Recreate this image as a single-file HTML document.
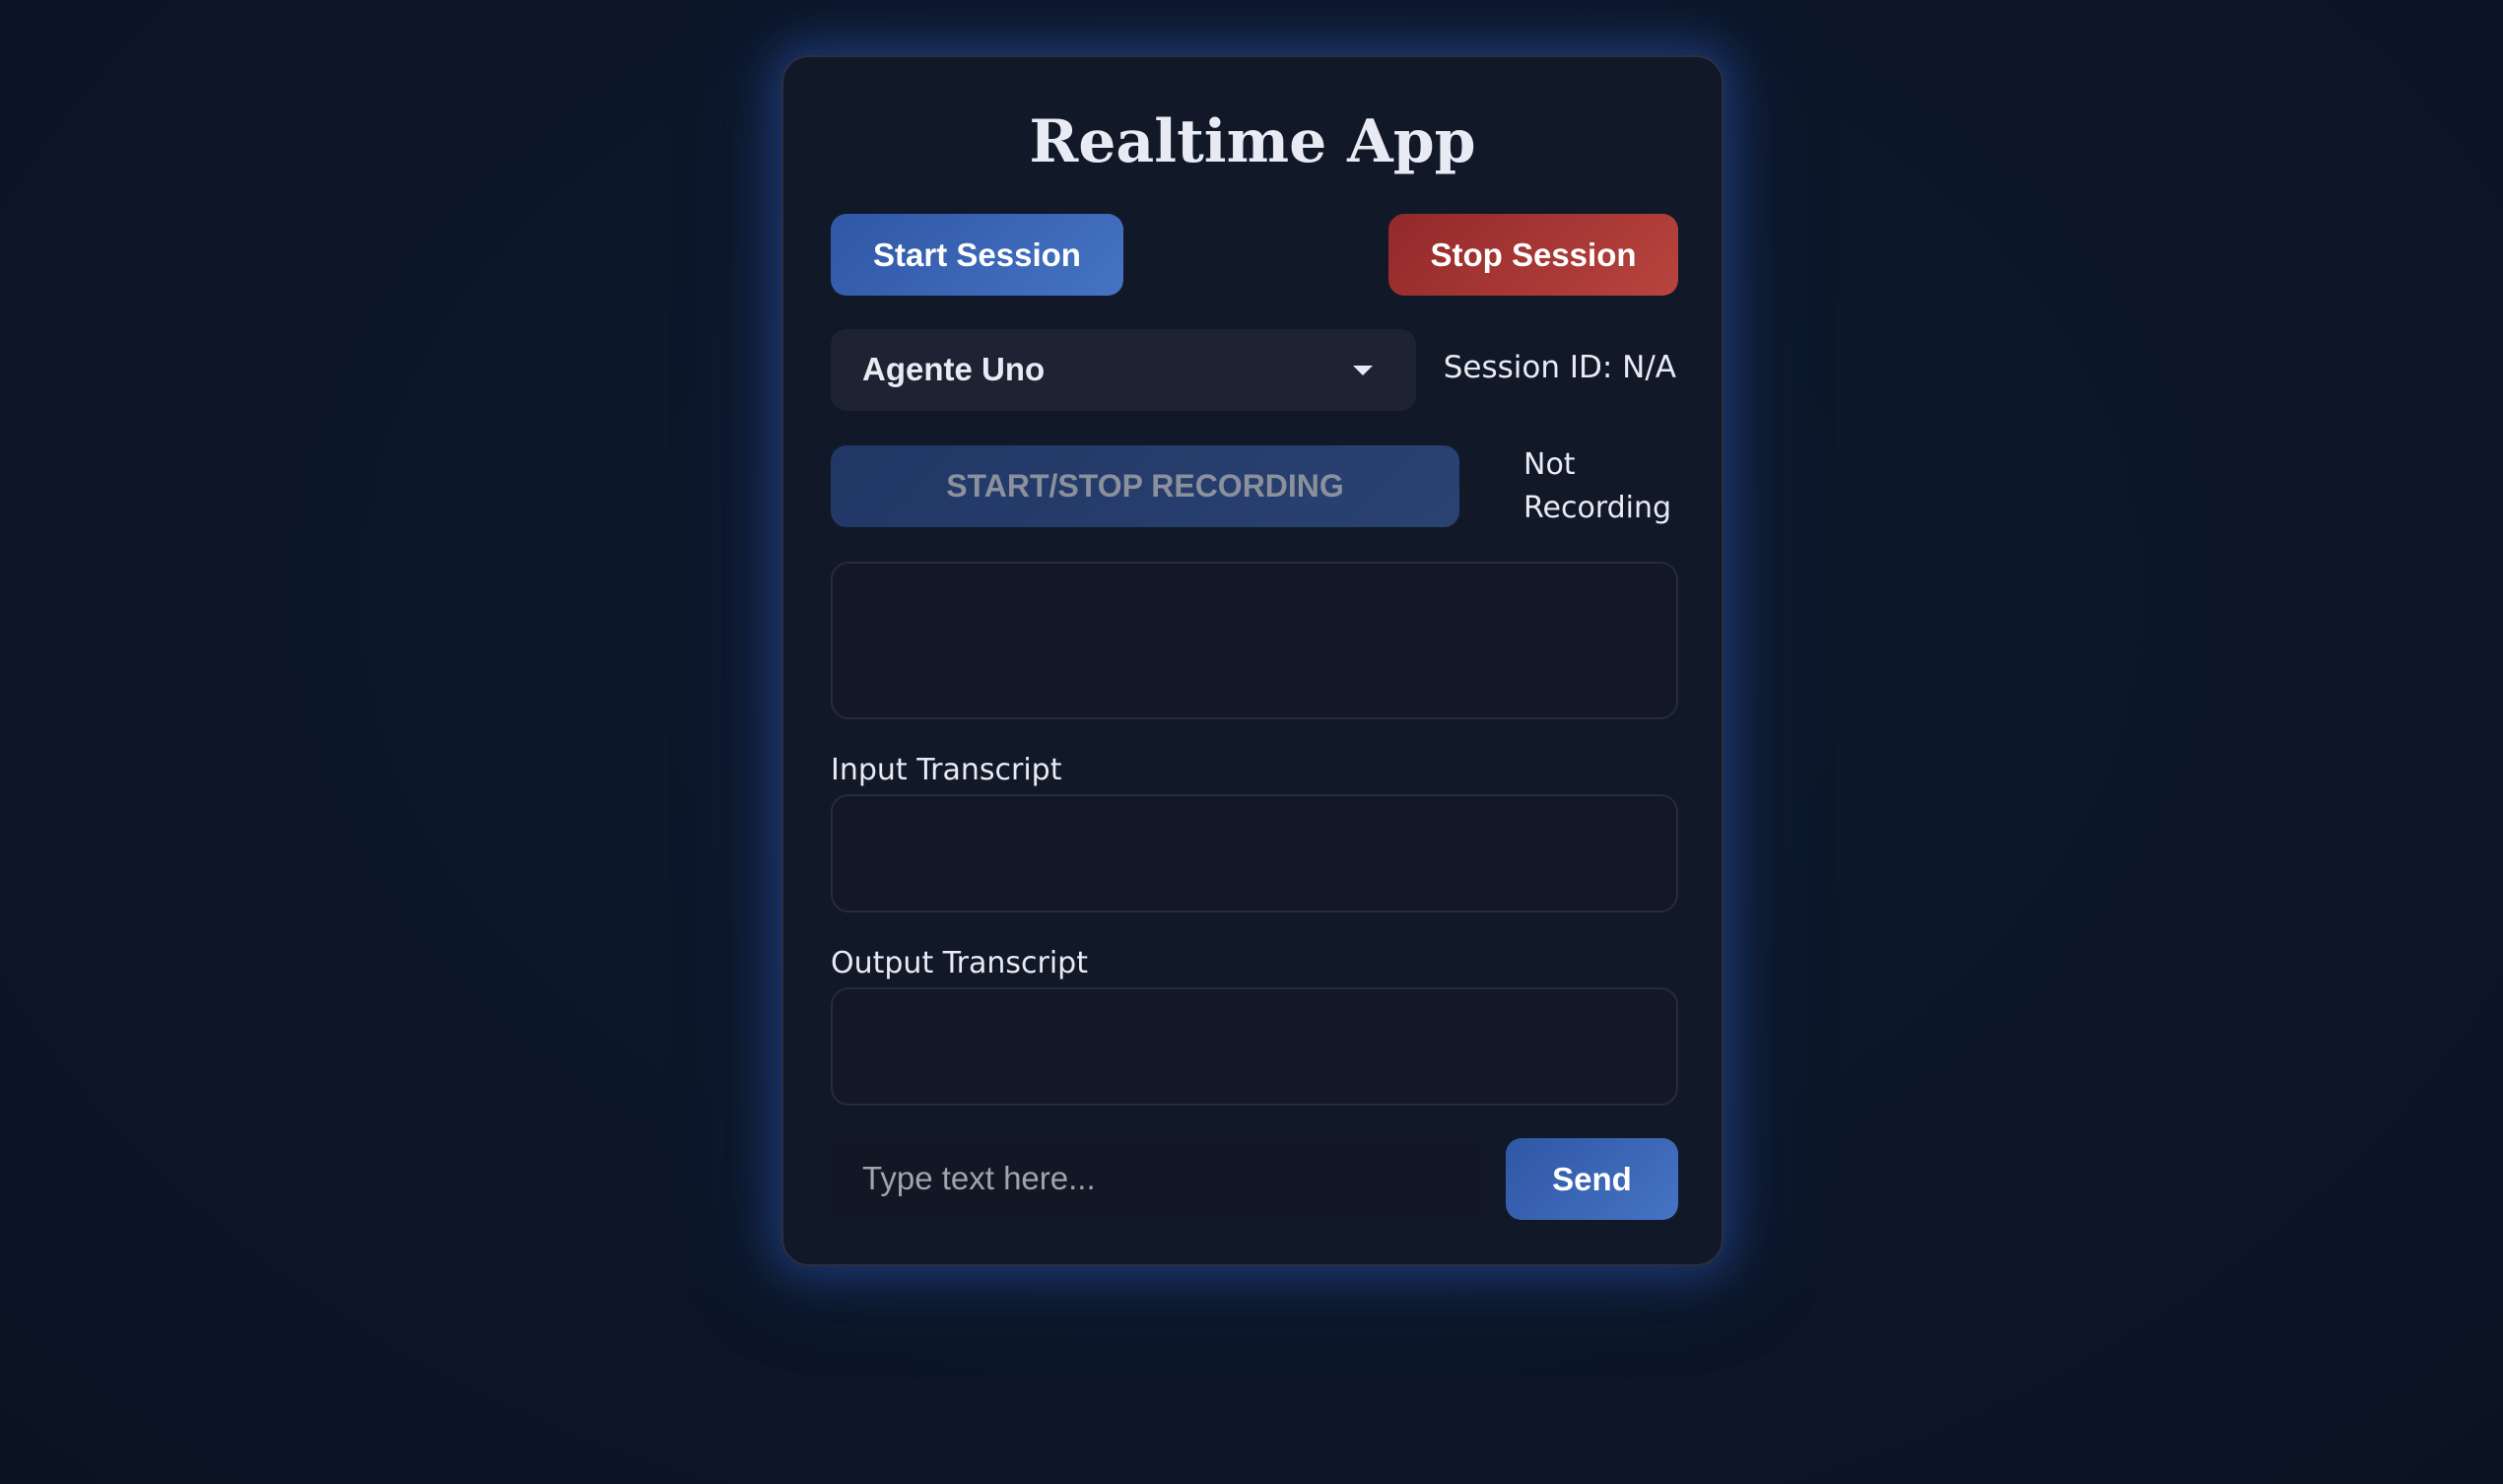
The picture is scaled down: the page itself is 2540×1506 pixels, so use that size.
<!DOCTYPE html>
<html><head><meta charset="utf-8"><style>
*{box-sizing:border-box;margin:0;padding:0}
html,body{width:2540px;height:1506px;overflow:hidden}
body{background:radial-gradient(ellipse at 50% 40%,#0f1a2e 0%,#0c1628 60%,#0a1322 100%);font-family:"DejaVu Sans","Liberation Sans",sans-serif;color:#e5e9f2;position:relative}
.card{position:absolute;left:793px;top:56px;width:956px;height:1229px;background:#111827;border:2px solid #2a3040;border-radius:28px;box-shadow:0 0 40px 12px rgba(37,72,150,.55),0 0 90px 20px rgba(30,58,122,.25)}
.abs{position:absolute}
h1{position:absolute;left:0;right:0;top:50px;line-height:72px;text-align:center;font-family:"DejaVu Serif","Liberation Serif",serif;font-weight:bold;font-size:60px;color:#e8ebf3}
.btn{position:absolute;border-radius:16px;color:#fff;font-family:"Liberation Sans",sans-serif;font-weight:bold;font-size:33px;display:flex;align-items:center;justify-content:center}
.blue{background:linear-gradient(135deg,#2f57a5,#4673c4)}
.red{background:linear-gradient(135deg,#93292a,#b8443e)}
.box{position:absolute;left:48px;width:860px;border:2px solid #262c3c;border-radius:18px;background:#121826}
.lbl{position:absolute;left:48px;font-size:30px;color:#e8ebf3}
</style></head><body>
<div class="card">
<h1>Realtime App</h1>
<div class="btn blue" style="left:48px;top:159px;width:297px;height:83px">Start Session</div>
<div class="btn red" style="left:614px;top:159px;width:294px;height:83px">Stop Session</div>
<div class="abs" style="left:48px;top:276px;width:594px;height:83px;background:#1e2333;border-radius:16px">
 <div class="abs" style="left:32px;top:22px;font-family:'Liberation Sans',sans-serif;font-weight:bold;font-size:33px;color:#e8ebf3">Agente Uno</div>
 <div class="abs" style="left:530px;top:37px;width:0;height:0;border-left:10px solid transparent;border-right:10px solid transparent;border-top:10px solid #e8ebf3"></div>
</div>
<div class="abs" style="right:46px;top:297px;font-size:31px;color:#e8ebf3">Session ID: N/A</div>
<div class="btn" style="left:48px;top:394px;width:638px;height:83px;background:linear-gradient(135deg,#213766,#2a4272);color:#8a909c;font-size:32px">START/STOP RECORDING</div>
<div class="abs" style="left:751px;top:392px;font-size:30px;line-height:44px;color:#e8ebf3">Not<br>Recording</div>
<div class="box" style="top:512px;height:160px"></div>
<div class="lbl" style="top:706px">Input Transcript</div>
<div class="box" style="top:748px;height:120px"></div>
<div class="lbl" style="top:902px">Output Transcript</div>
<div class="box" style="top:944px;height:120px"></div>
<div class="abs" style="left:48px;top:1097px;width:664px;height:83px;background:#111725;border-radius:16px">
 <div class="abs" style="left:32px;top:22px;font-family:'Liberation Sans',sans-serif;font-size:33px;color:#a0a4ad">Type text here...</div>
</div>
<div class="btn blue" style="left:733px;top:1097px;width:175px;height:83px">Send</div>
</div>
</body></html>
